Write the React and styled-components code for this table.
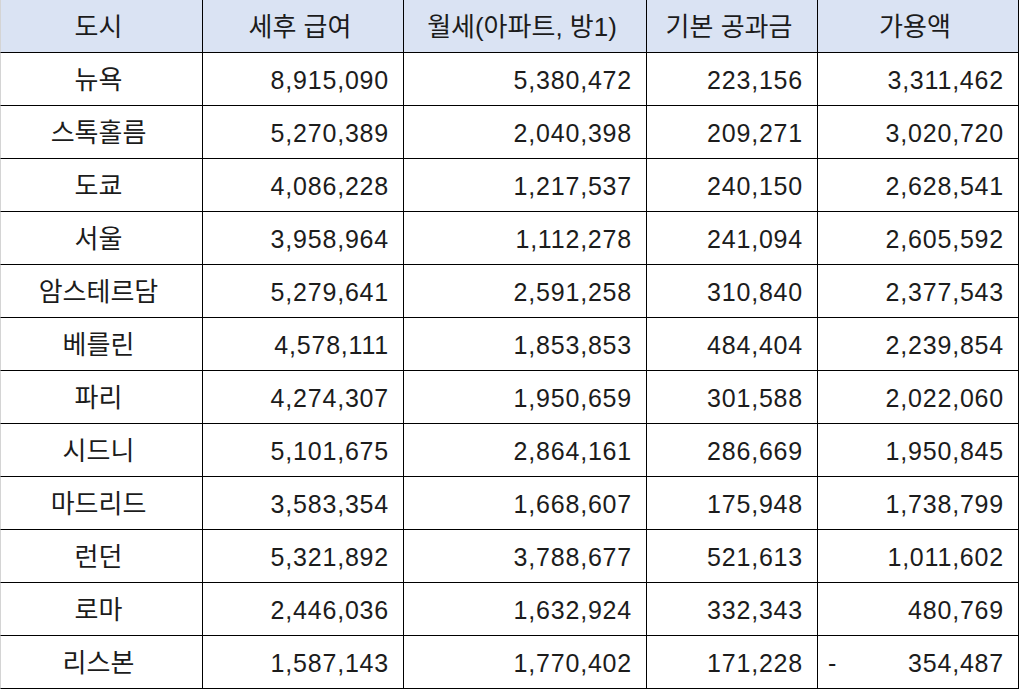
import React from "react";
import styled, { createGlobalStyle } from "styled-components";

const GlobalStyle = createGlobalStyle`
  html, body {
    margin: 0;
    padding: 0;
    background: #fff;
  }
  body {
    font-family: "Liberation Sans", "Noto Sans CJK KR", sans-serif;
    color: #1c1c1c;
  }
`;

const rows = [
  ["뉴욕", "8,915,090", "5,380,472", "223,156", "3,311,462"],
  ["스톡홀름", "5,270,389", "2,040,398", "209,271", "3,020,720"],
  ["도쿄", "4,086,228", "1,217,537", "240,150", "2,628,541"],
  ["서울", "3,958,964", "1,112,278", "241,094", "2,605,592"],
  ["암스테르담", "5,279,641", "2,591,258", "310,840", "2,377,543"],
  ["베를린", "4,578,111", "1,853,853", "484,404", "2,239,854"],
  ["파리", "4,274,307", "1,950,659", "301,588", "2,022,060"],
  ["시드니", "5,101,675", "2,864,161", "286,669", "1,950,845"],
  ["마드리드", "3,583,354", "1,668,607", "175,948", "1,738,799"],
  ["런던", "5,321,892", "3,788,677", "521,613", "1,011,602"],
  ["로마", "2,446,036", "1,632,924", "332,343", "480,769"],
  ["리스본", "1,587,143", "1,770,402", "171,228", "-354,487"],
];

const headers = ["도시", "세후 급여", "월세(아파트, 방1)", "기본 공과금", "가용액"];

const Sheet = styled.div`
  display: grid;
  grid-template-columns: 203px 201px 243px 171px 201px;
  width: 1019px;
`;

const Cell = styled.div`
  box-sizing: border-box;
  height: 53px;
  display: flex;
  align-items: center;
  justify-content: ${(p) => (p.$num ? "flex-end" : "center")};
  padding: 2px 14px 0 8px;
  border-right: 1px solid #000;
  border-bottom: 1px solid #000;
  border-left: ${(p) => (p.$first ? "1px solid #d4d4d4" : "none")};
  background: ${(p) => (p.$head ? "#dae3f3" : "#fff")};
  font-size: ${(p) => (p.$num ? "25px" : "26px")};
  letter-spacing: ${(p) => (p.$num ? "0.8px" : "0")};
  line-height: 1;
  white-space: nowrap;
`;

const Minus = styled.span`
  margin-right: auto;
  padding-left: 2px;
`;

const Amount = ({ value }) => {
  if (value.startsWith("-")) {
    return (
      <>
        <Minus>-</Minus>
        <span>{value.slice(1)}</span>
      </>
    );
  }
  return value;
};

const App = () => {
  return (
    <>
      <GlobalStyle />
      <Sheet>
        {headers.map((h, i) => (
          <Cell key={h} $head $first={i === 0}>
            {h}
          </Cell>
        ))}
        {rows.map((r) =>
          r.map((v, i) => (
            <Cell key={r[0] + i} $first={i === 0} $num={i > 0}>
              {i === 4 ? <Amount value={v} /> : v}
            </Cell>
          ))
        )}
      </Sheet>
    </>
  );
};

export default App;
